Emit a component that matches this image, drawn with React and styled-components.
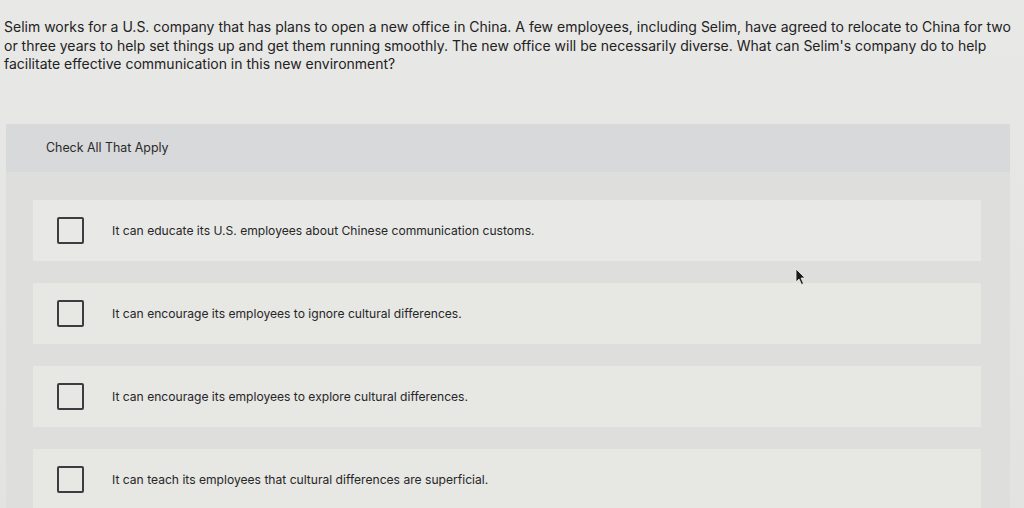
import React from 'react';
import styled, { createGlobalStyle } from 'styled-components';

const GlobalStyle = createGlobalStyle`
  html, body {
    margin: 0;
    padding: 0;
    background: #e5e5e3;
    font-family: Inter, Lato, Arial, sans-serif;
    color: #262626;
  }
  #root {
    height: 508px;
    overflow: hidden;
  }
`;

const Page = styled.div`
  position: relative;
  height: 508px;
  padding: 18px 0 0 4px;
  box-sizing: border-box;
  background: linear-gradient(180deg, #e8e8e6 0%, #e3e3e1 100%);
`;

const Question = styled.p`
  margin: 0;
  font-size: 14px;
  line-height: 18.5px;
  color: #222;
  white-space: nowrap;
`;

const Panel = styled.section`
  margin: 50px 0 0 2px;
  width: 1004px;
  background: #dfe0df;
`;

const Header = styled.div`
  height: 48px;
  display: flex;
  align-items: center;
  padding-left: 40px;
  background: #d7d9da;
  font-size: 12.4px;
  color: #2a2a2a;
`;

const Options = styled.ul`
  list-style: none;
  margin: 0;
  padding: 28px 29px 0 27px;
  display: flex;
  flex-direction: column;
  gap: 22px;
  background: #dededc;
`;

const Option = styled.li`
  height: 61px;
  display: flex;
  align-items: center;
  padding-left: 24px;
  background: ${p => (p.$first ? '#e8e9e7' : '#e7e7e4')};
`;

const Box = styled.span`
  width: 23px;
  height: 23px;
  border: 2px solid #3b3d40;
  border-radius: 2px;
  flex-shrink: 0;
`;

const Label = styled.span`
  margin-left: 28px;
  font-size: 12.1px;
  color: #262626;
`;

const Cursor = styled.svg`
  position: absolute;
  left: 795px;
  top: 268px;
`;

const options = [
  'It can educate its U.S. employees about Chinese communication customs.',
  'It can encourage its employees to ignore cultural differences.',
  'It can encourage its employees to explore cultural differences.',
  'It can teach its employees that cultural differences are superficial.',
];

export default function App() {
  return (
    <>
      <GlobalStyle />
      <Page>
        <Question>
          Selim works for a U.S. company that has plans to open a new office in China. A few employees, including Selim, have agreed to relocate to China for two
          <br />
          or three years to help set things up and get them running smoothly. The new office will be necessarily diverse. What can Selim's company do to help
          <br />
          facilitate effective communication in this new environment?
        </Question>
        <Panel>
          <Header>Check All That Apply</Header>
          <Options>
            {options.map((text, i) => (
              <Option key={i} $first={i === 0}>
                <Box />
                <Label>{text}</Label>
              </Option>
            ))}
          </Options>
        </Panel>
        <Cursor width="12" height="18" viewBox="0 0 12 18">
          <path d="M1 1 L1 14 L4 11 L6.5 16.5 L8.5 15.5 L6 10 L10 10 Z" fill="#1a1a1a" stroke="#f0f0f0" strokeWidth="0.8" />
        </Cursor>
      </Page>
    </>
  );
}
